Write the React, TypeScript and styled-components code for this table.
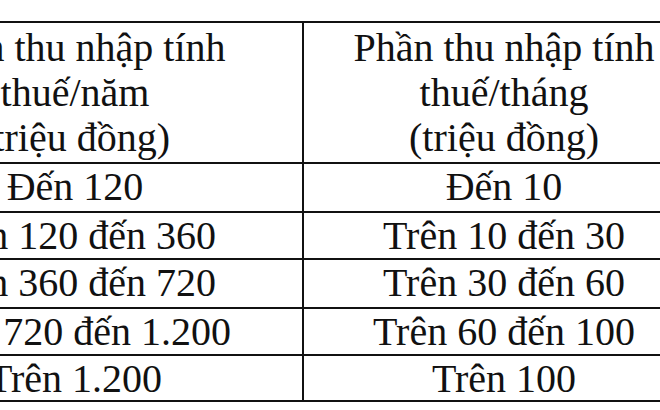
import React, { FC } from 'react';
import styled, { createGlobalStyle } from 'styled-components';

const GlobalStyle = createGlobalStyle`
  html, body {
    margin: 0;
    padding: 0;
    background: #ffffff;
    overflow: hidden;
  }
`;

const Page = styled.div`
  width: 660px;
  height: 410px;
  overflow: hidden;
  padding-top: 21px;
  box-sizing: border-box;
`;

// the table is wider than the photo: its left edge is cropped off
const TaxTable = styled.div`
  display: grid;
  grid-template-columns: 454px 400px;
  grid-template-rows: 139px 47px 45px 47px 45px 44px;
  gap: 2px;
  padding: 2px;
  margin-left: -154px;
  width: max-content;
  background: #111111;
  font-family: 'Liberation Serif', 'Times New Roman', serif;
  font-size: 40px;
  color: #111111;
`;

const Cell = styled.div<{ $head?: boolean }>`
  background: #ffffff;
  text-align: center;
  white-space: nowrap;
  line-height: ${(props) => (props.$head ? '45px' : '46px')};
  padding-top: ${(props) => (props.$head ? '2px' : '0')};
  overflow: visible;
`;

const rows: [string, string][] = [
  ['Đến 120', 'Đến 10'],
  ['Trên 120 đến 360', 'Trên 10 đến 30'],
  ['Trên 360 đến 720', 'Trên 30 đến 60'],
  ['Trên 720 đến 1.200', 'Trên 60 đến 100'],
  ['Trên 1.200', 'Trên 100'],
];

const App: FC = () => {
  return (
    <>
      <GlobalStyle />
      <Page>
        <TaxTable>
          <Cell $head>
            Phần thu nhập tính
            <br />
            thuế/năm
            <br />
            (triệu đồng)
          </Cell>
          <Cell $head>
            Phần thu nhập tính
            <br />
            thuế/tháng
            <br />
            (triệu đồng)
          </Cell>
          {rows.map(([year, month]) => (
            <React.Fragment key={year}>
              <Cell>{year}</Cell>
              <Cell>{month}</Cell>
            </React.Fragment>
          ))}
        </TaxTable>
      </Page>
    </>
  );
};

export default App;
